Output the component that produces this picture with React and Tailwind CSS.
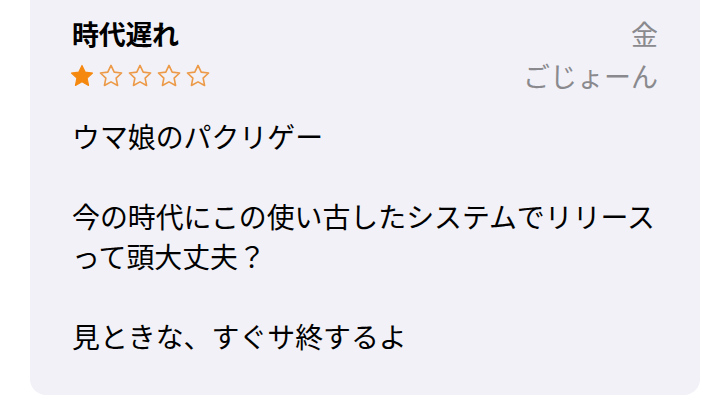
import React from 'react';

const STAR = 'M12 2.2l2.95 6.2 6.8.85-5 4.7 1.3 6.75L12 17.4l-6.05 3.3 1.3-6.75-5-4.7 6.8-.85z';

function Star({ filled }) {
  return (
    <svg width="26" height="26" viewBox="0 0 24 24" className="shrink-0">
      <path
        d={STAR}
        fill={filled ? '#f5880f' : 'none'}
        stroke={filled ? '#f5880f' : '#ec9a48'}
        strokeWidth={filled ? 1 : 1.5}
        strokeLinejoin="round"
      />
    </svg>
  );
}

const body = [
  'ウマ娘のパクリゲー',
  '',
  '今の時代にこの使い古したシステムでリリース',
  'って頭大丈夫？',
  '',
  '見ときな、すぐサ終するよ',
];

export default function App() {
  const rating = 1;
  return (
    <div
      className="w-[726px] h-[411px] bg-white overflow-hidden"
      style={{ fontFamily: '"Noto Sans CJK JP", "Noto Sans", sans-serif' }}
    >
      <div className="mx-[30px] w-[670px] bg-[#f2f1f7] rounded-b-[16px] px-[42px] pt-[14px] pb-[39px]">
        <div className="flex justify-between">
          <div>
            <div className="h-[40px] leading-[40px] text-[27px] font-bold text-black tracking-[-0.3px]">時代遅れ</div>
            <div className="h-[44px] flex items-center gap-[3px] -ml-[3px]">
              {[0, 1, 2, 3, 4].map(i => <Star key={i} filled={i < rating} />)}
            </div>
          </div>
          <div className="text-right text-[#8a8a8e] text-[27px]">
            <div className="h-[40px] leading-[40px]">金</div>
            <div className="h-[44px] leading-[44px]">ごじょーん</div>
          </div>
        </div>
        <div className="mt-[18px] text-[27.9px] leading-[40px] text-black whitespace-nowrap">
          {body.map((line, i) => (
            <div key={i} className="h-[40px]">{line}</div>
          ))}
        </div>
      </div>
    </div>
  );
}
